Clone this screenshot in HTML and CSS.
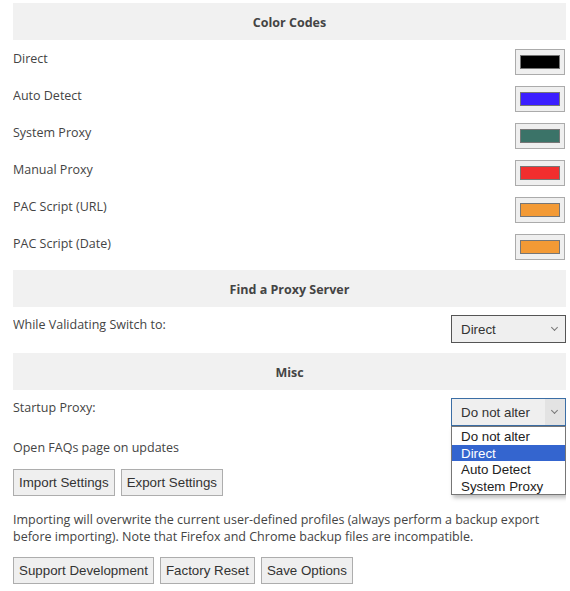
FILE: index.html
```html
<!DOCTYPE html>
<html lang="en">
<head>
  <meta charset="UTF-8" />
  <title>Options</title>
  <link rel="stylesheet" href="styles.css">
</head>
<body>
  <div class="section-title first">Color Codes</div>

  <div class="row">
    <span class="label">Direct</span>
    <span class="swatch"><span class="chip" style="background:#000000"></span></span>
  </div>
  <div class="row">
    <span class="label">Auto Detect</span>
    <span class="swatch"><span class="chip" style="background:#3b1eff"></span></span>
  </div>
  <div class="row">
    <span class="label">System Proxy</span>
    <span class="swatch"><span class="chip" style="background:#3b7368"></span></span>
  </div>
  <div class="row">
    <span class="label">Manual Proxy</span>
    <span class="swatch"><span class="chip" style="background:#f22e2e"></span></span>
  </div>
  <div class="row">
    <span class="label">PAC Script (URL)</span>
    <span class="swatch"><span class="chip" style="background:#f39a35"></span></span>
  </div>
  <div class="row">
    <span class="label">PAC Script (Date)</span>
    <span class="swatch"><span class="chip" style="background:#f39a35"></span></span>
  </div>

  <div class="section-title">Find a Proxy Server</div>

  <div class="row select-row">
    <span class="label">While Validating Switch to:</span>
    <span class="select">Direct<span class="arrow"></span></span>
  </div>

  <div class="section-title">Misc</div>

  <div class="row select-row">
    <span class="label">Startup Proxy:</span>
    <span class="dropdown">
      <span class="select open">Do not alter<span class="arrow"></span></span>
      <span class="options">
        <span class="option">Do not alter</span>
        <span class="option active">Direct</span>
        <span class="option">Auto Detect</span>
        <span class="option">System Proxy</span>
      </span>
    </span>
  </div>
  <div class="row text-row">
    <span class="label">Open FAQs page on updates</span>
    <input type="checkbox" class="check">
  </div>

  <div class="buttons">
    <button>Import Settings</button>
    <button>Export Settings</button>
  </div>

  <p class="note">Importing will overwrite the current user-defined profiles (always perform a backup export before importing). Note that Firefox and Chrome backup files are incompatible.</p>

  <div class="buttons">
    <button>Support Development</button>
    <button>Factory Reset</button>
    <button>Save Options</button>
  </div>
</body>
</html>
```

FILE: styles.css
```css
:root {
  --text: #444;
  --band: #f1f1f1;
  --btn: #efefef;
  --btn-border: #adadad;
}

body {
  font-family: "Open Sans", "Noto Sans", sans-serif;
  font-size: 12.5px;
  color: var(--text);
  margin: 3px 4px 0 13px;
  background: #fff;
}

.section-title {
  background: var(--band);
  height: 37px;
  line-height: 39px;
  overflow: hidden;
  text-align: center;
  font-weight: bold;
  margin-top: 8px;
}

.section-title.first {
  margin-top: 0;
}

.row {
  display: flex;
  justify-content: space-between;
  align-items: flex-start;
  padding: 9px 0 2px;
}

.select-row {
  padding: 8px 0 2px;
}

.label {
  line-height: 17px;
  padding-top: 1px;
}

.swatch {
  box-sizing: border-box;
  width: 50px;
  height: 26px;
  border: 1px solid #ababab;
  background: #efefef;
  padding: 5px 4px;
  margin-right: 1px;
}

.chip {
  display: block;
  height: 100%;
  box-sizing: border-box;
  border: 1px solid #767676;
}

.select {
  box-sizing: border-box;
  position: relative;
  display: block;
  width: 115px;
  height: 28px;
  border: 1px solid #555;
  background: #efefef;
  font-family: "Liberation Sans", Arial, sans-serif;
  font-size: 13.333px;
  color: #333;
  line-height: 28px;
  padding-left: 9px;
}

.arrow {
  position: absolute;
  right: 0;
  top: 0;
  width: 20px;
  height: 26px;
}

.arrow::after {
  content: "";
  position: absolute;
  left: 7px;
  top: 9px;
  width: 4px;
  height: 4px;
  border-right: 1px solid #777;
  border-bottom: 1px solid #777;
  transform: rotate(45deg);
}

.select.open {
  border-color: #3b6ea5;
}

.select.open .arrow {
  background: #e3e3e3;
}

.dropdown {
  position: relative;
}

.options {
  position: absolute;
  left: 0;
  top: 28px;
  z-index: 2;
  box-sizing: border-box;
  width: 115px;
  padding-top: 1px;
  background: #fff;
  border: 1px solid #767676;
  box-shadow: 2px 3px 4px rgba(0,0,0,0.25);
  font-family: "Liberation Sans", Arial, sans-serif;
  font-size: 13.333px;
  color: #222;
}

.option {
  display: block;
  height: 16.5px;
  line-height: 18px;
  padding-left: 9px;
}

.option.active {
  background: #3465cf;
  color: #fff;
}

.text-row {
  padding: 10px 0 0;
  height: 38px;
  box-sizing: border-box;
}

.check {
  margin: 2px 10px 0 0;
}

.buttons {
  display: flex;
  gap: 6px;
  margin-top: 3px;
}

button {
  font-family: "Liberation Sans", Arial, sans-serif;
  font-size: 13.333px;
  color: #333;
  background: var(--btn);
  border: 1px solid var(--btn-border);
  padding: 4px 5px;
  height: 27px;
  line-height: 17px;
}

.note {
  margin: 15px 0 12px;
  line-height: 17px;
}
```
